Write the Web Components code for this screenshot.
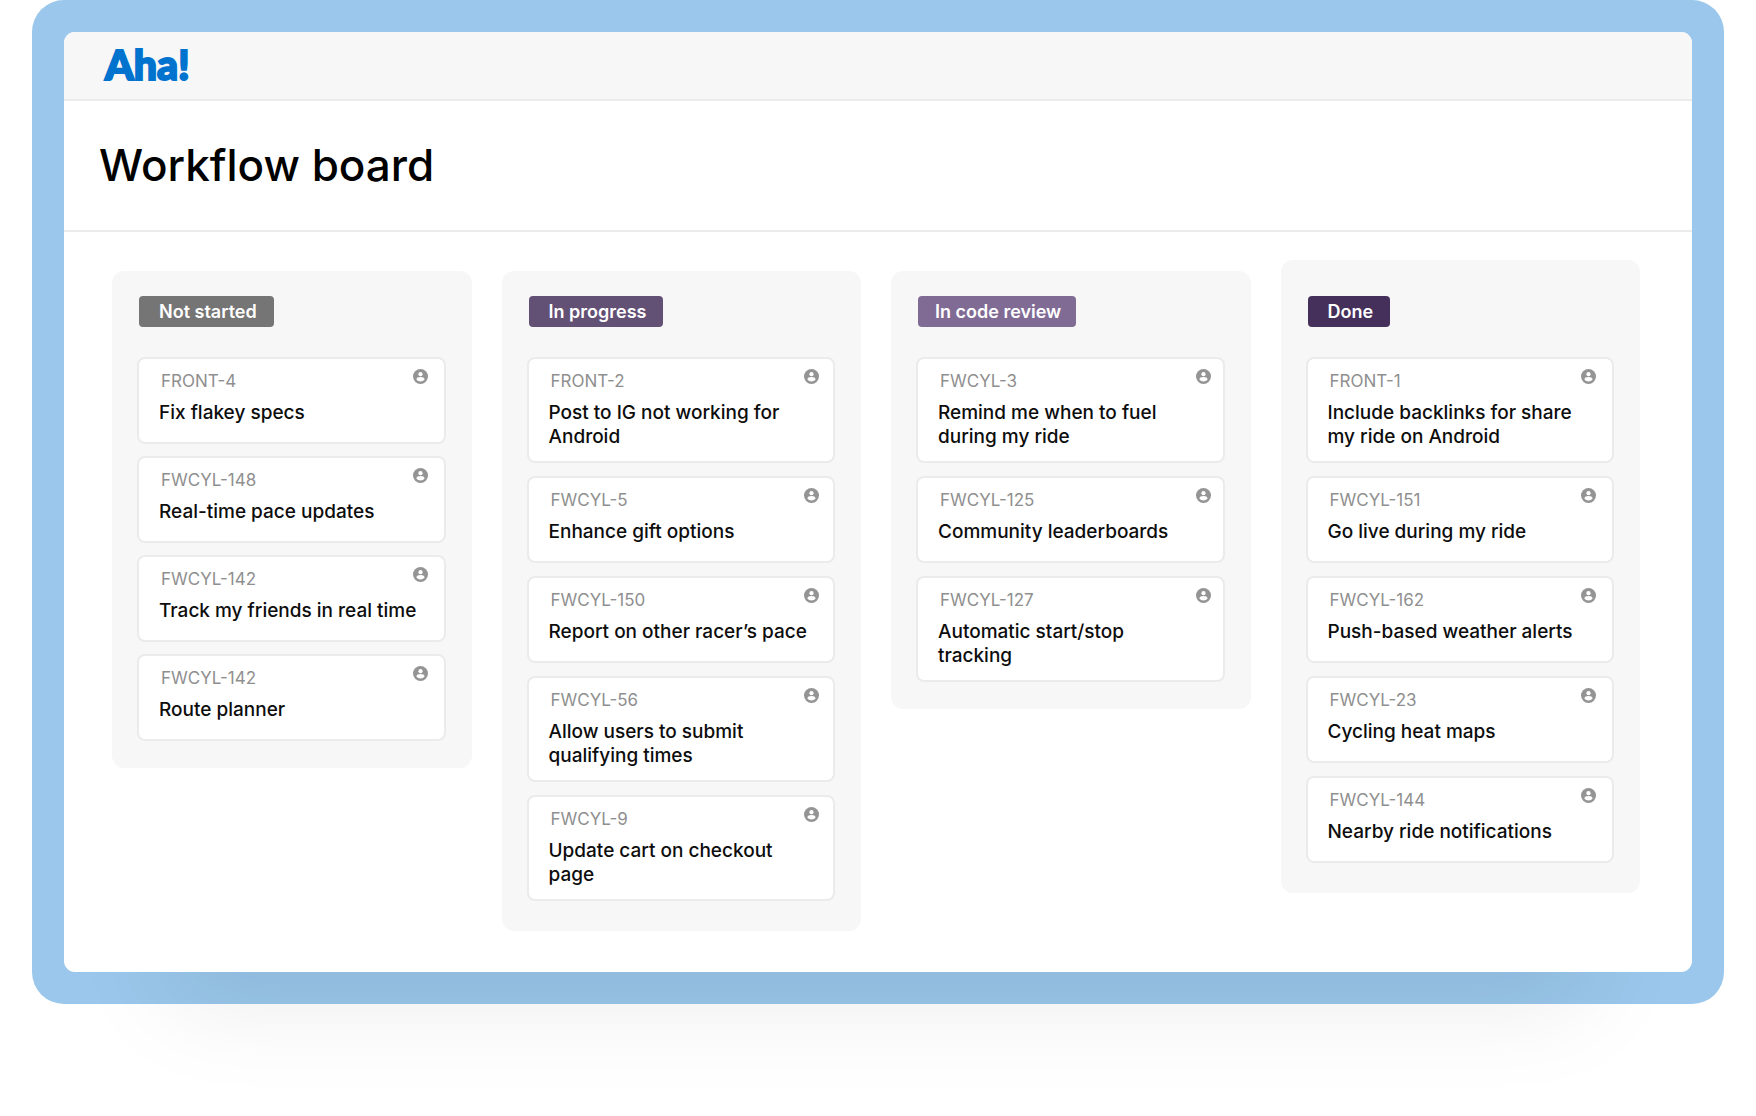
<!DOCTYPE html>
<html lang="en">
<head>
<meta charset="UTF-8">
<meta name="viewport" content="width=device-width, initial-scale=1">
<title>Workflow board</title>
<style>
    body {
        min-height: 100vh;
        margin: 0;
        background-color: #fff;
        font-family: Inter, "Liberation Sans", sans-serif;
    }
</style>
</head>
<body>
<app-window>
    <span slot="brand">Aha!</span>
    <span slot="title">Workflow board</span>

    <board-column name="Not started" status="todo">
        <board-card key="FRONT-4">Fix flakey specs</board-card>
        <board-card key="FWCYL-148">Real-time pace updates</board-card>
        <board-card key="FWCYL-142">Track my friends in real time</board-card>
        <board-card key="FWCYL-142">Route planner</board-card>
    </board-column>

    <board-column name="In progress" status="progress">
        <board-card key="FRONT-2">Post to IG not working for Android</board-card>
        <board-card key="FWCYL-5">Enhance gift options</board-card>
        <board-card key="FWCYL-150">Report on other racer’s pace</board-card>
        <board-card key="FWCYL-56">Allow users to submit qualifying times</board-card>
        <board-card key="FWCYL-9">Update cart on checkout page</board-card>
    </board-column>

    <board-column name="In code review" status="review">
        <board-card key="FWCYL-3">Remind me when to fuel during my ride</board-card>
        <board-card key="FWCYL-125">Community leaderboards</board-card>
        <board-card key="FWCYL-127">Automatic start/stop tracking</board-card>
    </board-column>

    <board-column name="Done" status="done">
        <board-card key="FRONT-1">Include backlinks for share my ride on Android</board-card>
        <board-card key="FWCYL-151">Go live during my ride</board-card>
        <board-card key="FWCYL-162">Push-based weather alerts</board-card>
        <board-card key="FWCYL-23">Cycling heat maps</board-card>
        <board-card key="FWCYL-144">Nearby ride notifications</board-card>
    </board-column>
</app-window>

<script>
class AppWindow extends HTMLElement {
    constructor() {
        super();
        this.attachShadow({ mode: 'open' });
        this.shadowRoot.innerHTML = `
            <style>
                :host {
                    display: block;
                    margin: 0 32px;
                    padding: 32px;
                    border-radius: 32px;
                    background-color: #9ac7eb;
                }
                .window {
                    border-radius: 11px;
                    background-color: #fff;
                    box-shadow: 0 136px 96px -104px rgba(0, 0, 0, 0.08);
                }
                header {
                    display: flex;
                    align-items: center;
                    height: 65px;
                    padding: 0 41px 2px;
                    border-bottom: 2px solid #ebebeb;
                    border-radius: 11px 11px 0 0;
                    background-color: #f7f7f7;
                }
                .brand {
                    color: #0073cf;
                    font-family: Lato, sans-serif;
                    font-size: 41px;
                    font-weight: 900;
                    line-height: 48px;
                    -webkit-text-stroke: 2px #0073cf;
                }
                .heading {
                    padding: 36px 35px;
                    border-bottom: 2px solid #ebebeb;
                }
                h1 {
                    margin: 0;
                    color: #000;
                    font-size: 44px;
                    font-weight: 500;
                    line-height: 57px;
                }
                .board {
                    display: grid;
                    grid-template-columns: repeat(4, minmax(0, 1fr));
                    align-items: start;
                    gap: 30px;
                    padding: 28px 52px 41px 48px;
                }
            </style>
            <div class="window">
                <header><div class="brand"><slot name="brand"></slot></div></header>
                <div class="heading"><h1><slot name="title"></slot></h1></div>
                <main class="board"><slot></slot></main>
            </div>
        `;
    }
}

class StatusPill extends HTMLElement {
    constructor() {
        super();
        this.attachShadow({ mode: 'open' });
        this.shadowRoot.innerHTML = `
            <style>
                :host {
                    display: inline-block;
                    padding: var(--pill-padding, 0 17px 0 20px);
                    border-radius: 4px;
                    background-color: var(--status-color, #757575);
                    color: #fff;
                    font-size: 18px;
                    font-weight: 600;
                    line-height: 31px;
                    white-space: nowrap;
                }
            </style>
            <slot></slot>
        `;
    }
}

class BoardColumn extends HTMLElement {
    constructor() {
        super();
        this.attachShadow({ mode: 'open' });
        this.shadowRoot.innerHTML = `
            <style>
                :host {
                    display: block;
                    margin-top: 11px;
                    padding: 25px 26px 27px 25px;
                    border-radius: 12px;
                    background-color: #f7f7f7;
                    --card-gap: 13px;
                    --icon-inset: 16px;
                }
                :host([status="todo"]) {
                    --status-color: #757575;
                    --card-gap: 12px;
                }
                :host([status="progress"]) {
                    --status-color: #635075;
                    --icon-inset: 14px;
                    padding-bottom: 30px;
                }
                :host([status="review"]) {
                    --status-color: #806b95;
                    --pill-padding: 0 15px 0 17px;
                    --icon-inset: 12px;
                }
                :host([status="done"]) {
                    --status-color: #452f5b;
                    margin-top: 0;
                    padding-top: 36px;
                    padding-bottom: 30px;
                }
                h2 {
                    display: flex;
                    margin: 0 2px 30px;
                    font: inherit;
                }
                .cards {
                    display: flex;
                    flex-direction: column;
                    gap: var(--card-gap);
                }
            </style>
            <section>
                <h2><status-pill></status-pill></h2>
                <div class="cards"><slot></slot></div>
            </section>
        `;
    }

    connectedCallback() {
        this.shadowRoot.querySelector('status-pill').textContent = this.getAttribute('name');
    }
}

class BoardCard extends HTMLElement {
    constructor() {
        super();
        this.attachShadow({ mode: 'open' });
        this.shadowRoot.innerHTML = `
            <style>
                :host {
                    display: block;
                    box-sizing: border-box;
                    min-height: 87px;
                    padding: 10px 0 12px 20px;
                    border: 2px solid #ebebeb;
                    border-radius: 8px;
                    background-color: #fff;
                }
                .top {
                    display: flex;
                    justify-content: space-between;
                    padding: 0 var(--icon-inset, 16px) 0 2px;
                }
                .key {
                    color: #8f8f8f;
                    font-size: 17px;
                    line-height: 24px;
                }
                svg {
                    display: block;
                    width: 15px;
                    height: 15px;
                }
                h3 {
                    margin: 8px 22px 0 0;
                    color: #0d0d0d;
                    font-size: 19px;
                    font-weight: 500;
                    line-height: 24px;
                }
            </style>
            <article>
                <div class="top">
                    <span class="key"></span>
                    <svg viewBox="0 0 15 15" aria-hidden="true">
                        <circle cx="7.5" cy="7.5" r="7.5" fill="#949494"/>
                        <circle cx="7.5" cy="5.2" r="2.1" fill="#fff"/>
                        <path d="M3.4 10.6c0-1.8 1.8-2.6 4.1-2.6s4.1.8 4.1 2.6c-1 1.2-2.4 1.9-4.1 1.9s-3.1-.7-4.1-1.9z" fill="#fff"/>
                    </svg>
                </div>
                <h3><slot></slot></h3>
            </article>
        `;
    }

    connectedCallback() {
        this.shadowRoot.querySelector('.key').textContent = this.getAttribute('key');
    }
}

customElements.define('app-window', AppWindow);
customElements.define('status-pill', StatusPill);
customElements.define('board-column', BoardColumn);
customElements.define('board-card', BoardCard);
</script>
</body>
</html>
